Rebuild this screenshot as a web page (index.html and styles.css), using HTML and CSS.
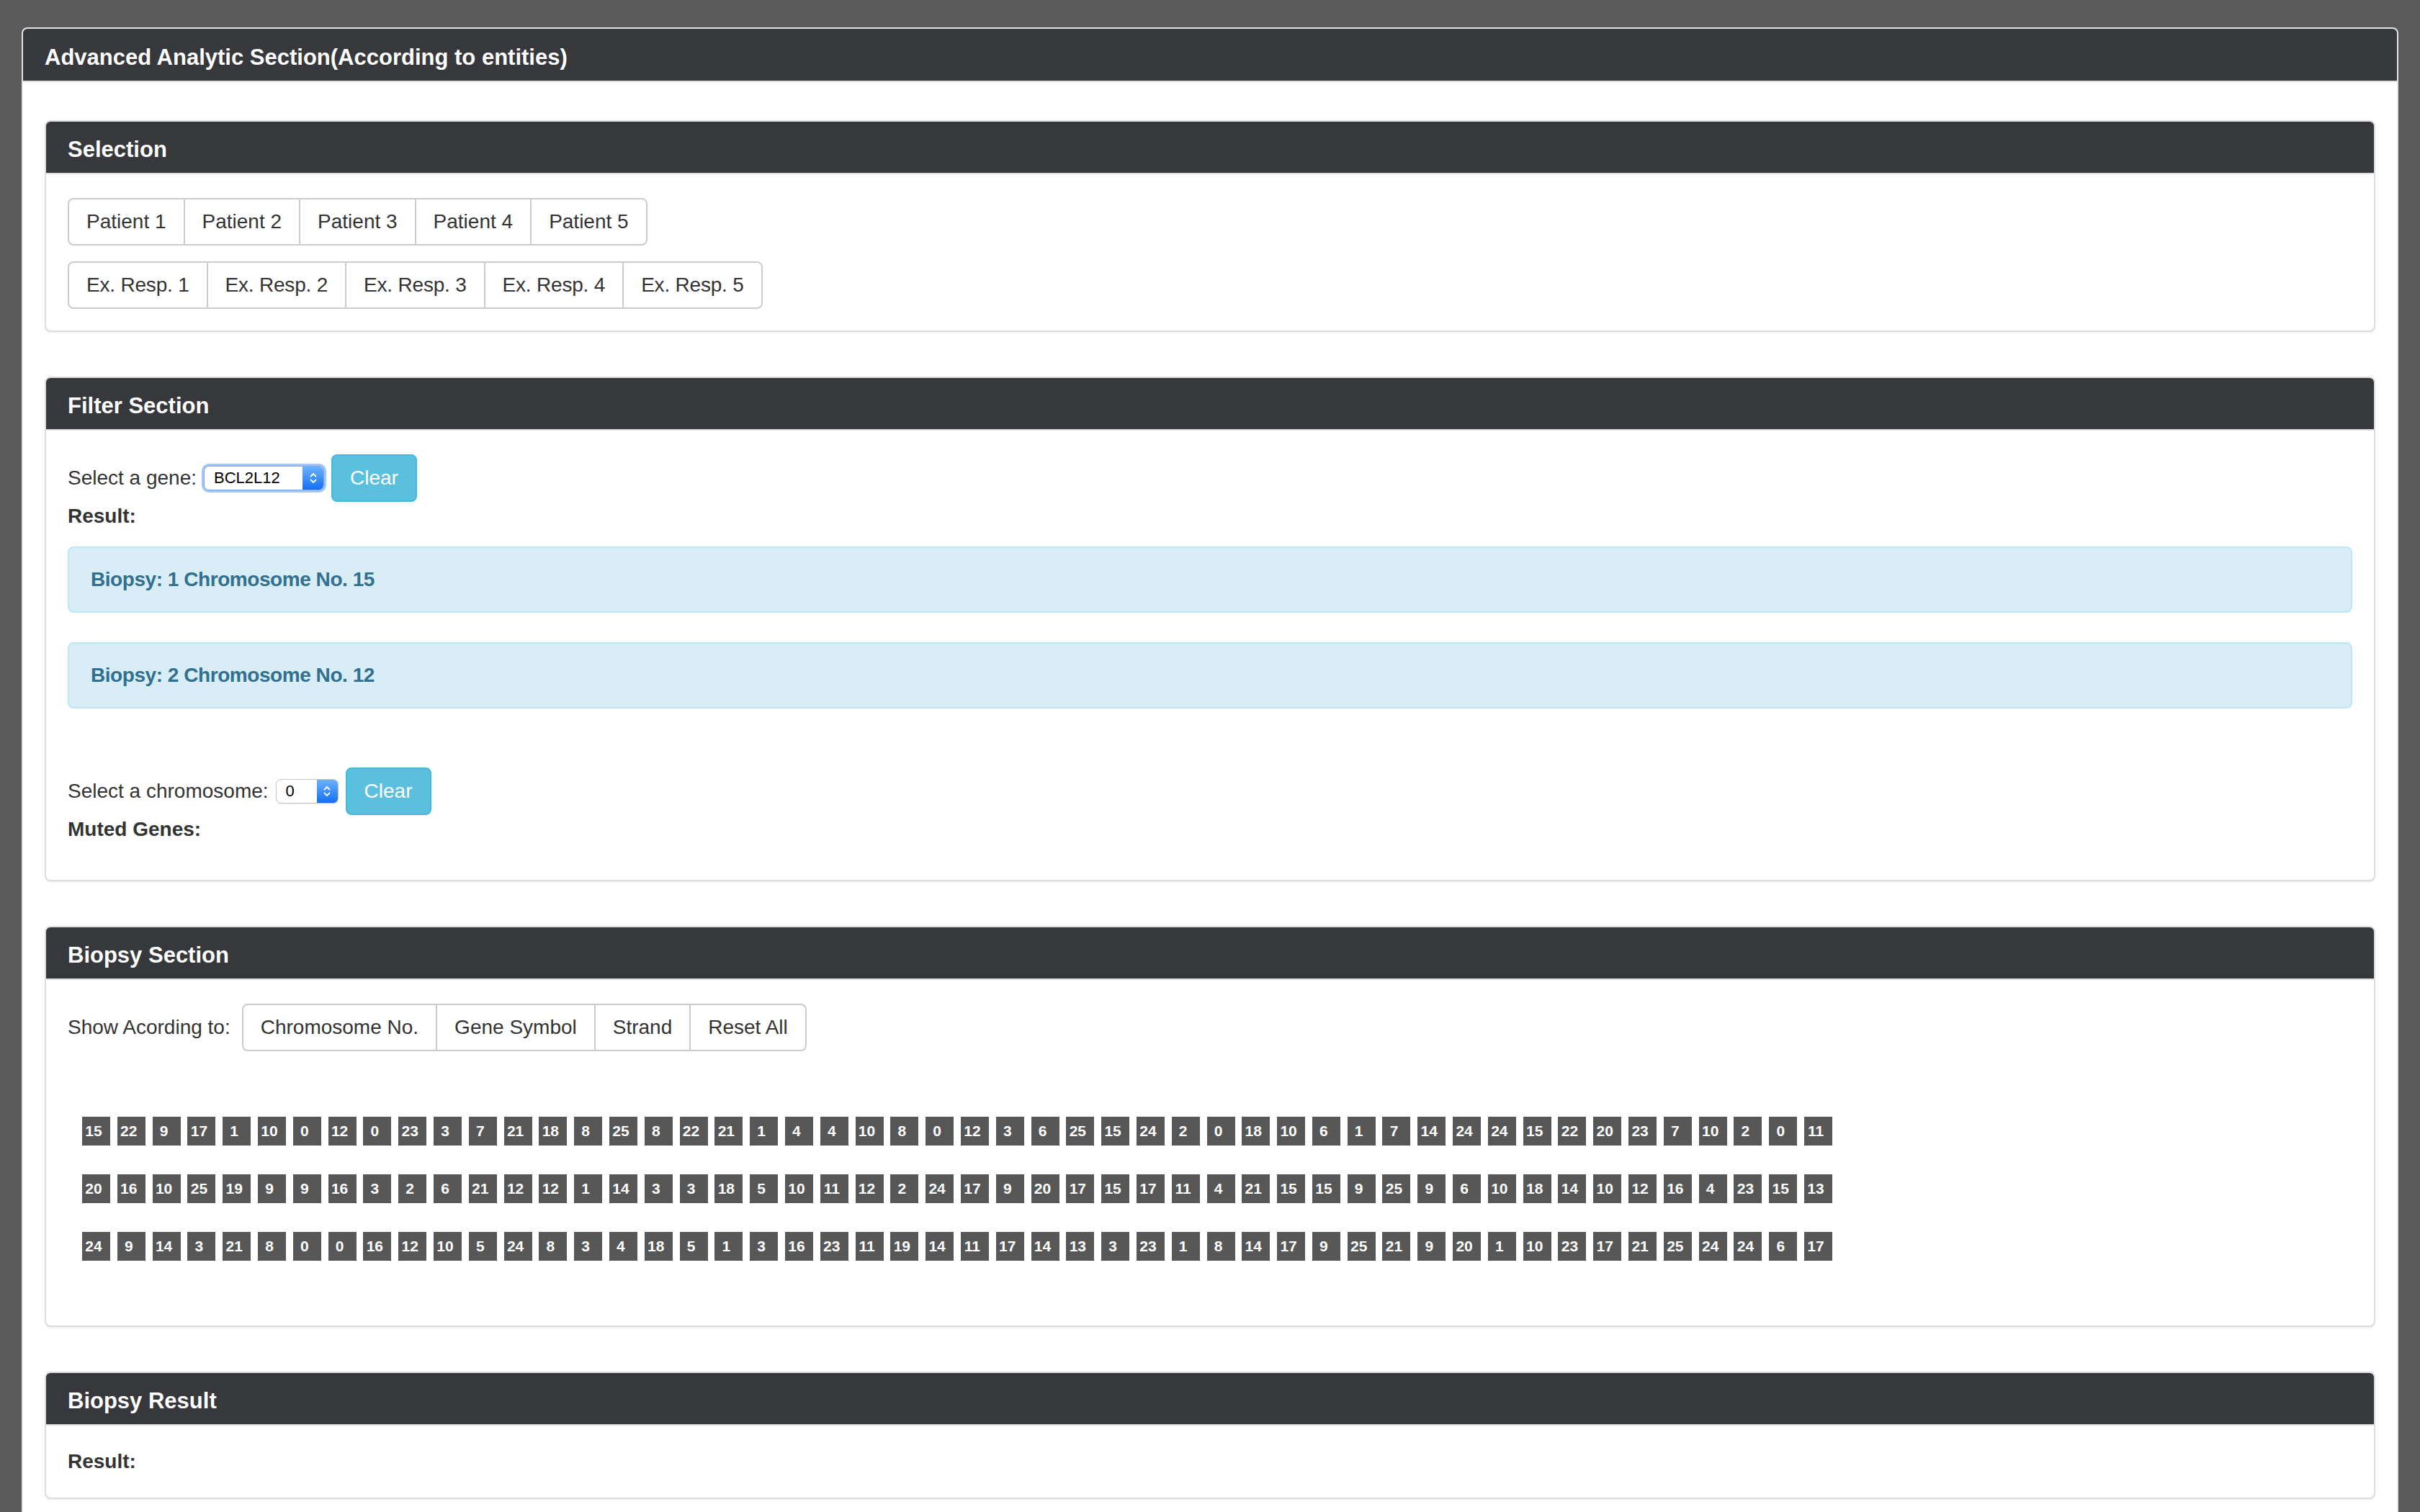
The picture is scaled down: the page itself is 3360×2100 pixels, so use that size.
FILE: index.html
```html
<!DOCTYPE html>
<html lang="en">
<head>
<meta charset="utf-8">
<title>Advanced Analytic Section</title>
<link rel="stylesheet" href="styles.css">
</head>
<body>
<div class="page">
  <div class="panel panel-outer">
    <div class="panel-heading heading-outer">Advanced Analytic Section(According to entities)</div>
    <div class="outer-body">

      <section class="panel section-panel">
        <div class="panel-heading">Selection</div>
        <div class="panel-body">
          <div class="btn-group group-gap">
            <button type="button" class="btn">Patient 1</button>
            <button type="button" class="btn">Patient 2</button>
            <button type="button" class="btn">Patient 3</button>
            <button type="button" class="btn">Patient 4</button>
            <button type="button" class="btn">Patient 5</button>
          </div>
          <div class="btn-group btn-tight">
            <button type="button" class="btn">Ex. Resp. 1</button>
            <button type="button" class="btn">Ex. Resp. 2</button>
            <button type="button" class="btn">Ex. Resp. 3</button>
            <button type="button" class="btn">Ex. Resp. 4</button>
            <button type="button" class="btn">Ex. Resp. 5</button>
          </div>
        </div>
      </section>

      <section class="panel section-panel">
        <div class="panel-heading">Filter Section</div>
        <div class="panel-body">
          <div class="form-row">
            <span class="form-label">Select a gene:</span>
            <div class="mac-select select-gene">
              <span class="select-value">BCL2L12</span>
              <span class="select-arrows"><svg width="12" height="20" viewBox="0 0 12 20"><path d="M2.5 7.5 L6 4 L9.5 7.5 M2.5 12.5 L6 16 L9.5 12.5" fill="none" stroke="#fff" stroke-width="1.8" stroke-linecap="round" stroke-linejoin="round"/></svg></span>
            </div>
            <button type="button" class="btn btn-info">Clear</button>
          </div>
          <p class="strong-line result-gap">Result:</p>
          <div class="alert alert-first">Biopsy: 1 Chromosome No. 15</div>
          <div class="alert alert-last">Biopsy: 2 Chromosome No. 12</div>
          <div class="form-row">
            <span class="form-label">Select a chromosome:</span>
            <div class="mac-select select-chrom">
              <span class="select-value">0</span>
              <span class="select-arrows"><svg width="12" height="20" viewBox="0 0 12 20"><path d="M2.5 7.5 L6 4 L9.5 7.5 M2.5 12.5 L6 16 L9.5 12.5" fill="none" stroke="#fff" stroke-width="1.8" stroke-linecap="round" stroke-linejoin="round"/></svg></span>
            </div>
            <button type="button" class="btn btn-info">Clear</button>
          </div>
          <p class="strong-line muted-gap">Muted Genes:</p>
        </div>
      </section>

      <section class="panel section-panel">
        <div class="panel-heading">Biopsy Section</div>
        <div class="panel-body">
          <div class="form-row">
            <span class="form-label show-label">Show Acording to:</span>
            <div class="btn-group">
              <button type="button" class="btn">Chromosome No.</button>
              <button type="button" class="btn">Gene Symbol</button>
              <button type="button" class="btn">Strand</button>
              <button type="button" class="btn">Reset All</button>
            </div>
          </div>
          <div class="chips">
            <div class="chip-row">
              <span class="chip">15</span><span class="chip">22</span><span class="chip">9</span><span class="chip">17</span><span class="chip">1</span><span class="chip">10</span><span class="chip">0</span><span class="chip">12</span><span class="chip">0</span><span class="chip">23</span><span class="chip">3</span><span class="chip">7</span><span class="chip">21</span><span class="chip">18</span><span class="chip">8</span><span class="chip">25</span><span class="chip">8</span><span class="chip">22</span><span class="chip">21</span><span class="chip">1</span><span class="chip">4</span><span class="chip">4</span><span class="chip">10</span><span class="chip">8</span><span class="chip">0</span><span class="chip">12</span><span class="chip">3</span><span class="chip">6</span><span class="chip">25</span><span class="chip">15</span><span class="chip">24</span><span class="chip">2</span><span class="chip">0</span><span class="chip">18</span><span class="chip">10</span><span class="chip">6</span><span class="chip">1</span><span class="chip">7</span><span class="chip">14</span><span class="chip">24</span><span class="chip">24</span><span class="chip">15</span><span class="chip">22</span><span class="chip">20</span><span class="chip">23</span><span class="chip">7</span><span class="chip">10</span><span class="chip">2</span><span class="chip">0</span><span class="chip">11</span>
            </div>
            <div class="chip-row">
              <span class="chip">20</span><span class="chip">16</span><span class="chip">10</span><span class="chip">25</span><span class="chip">19</span><span class="chip">9</span><span class="chip">9</span><span class="chip">16</span><span class="chip">3</span><span class="chip">2</span><span class="chip">6</span><span class="chip">21</span><span class="chip">12</span><span class="chip">12</span><span class="chip">1</span><span class="chip">14</span><span class="chip">3</span><span class="chip">3</span><span class="chip">18</span><span class="chip">5</span><span class="chip">10</span><span class="chip">11</span><span class="chip">12</span><span class="chip">2</span><span class="chip">24</span><span class="chip">17</span><span class="chip">9</span><span class="chip">20</span><span class="chip">17</span><span class="chip">15</span><span class="chip">17</span><span class="chip">11</span><span class="chip">4</span><span class="chip">21</span><span class="chip">15</span><span class="chip">15</span><span class="chip">9</span><span class="chip">25</span><span class="chip">9</span><span class="chip">6</span><span class="chip">10</span><span class="chip">18</span><span class="chip">14</span><span class="chip">10</span><span class="chip">12</span><span class="chip">16</span><span class="chip">4</span><span class="chip">23</span><span class="chip">15</span><span class="chip">13</span>
            </div>
            <div class="chip-row">
              <span class="chip">24</span><span class="chip">9</span><span class="chip">14</span><span class="chip">3</span><span class="chip">21</span><span class="chip">8</span><span class="chip">0</span><span class="chip">0</span><span class="chip">16</span><span class="chip">12</span><span class="chip">10</span><span class="chip">5</span><span class="chip">24</span><span class="chip">8</span><span class="chip">3</span><span class="chip">4</span><span class="chip">18</span><span class="chip">5</span><span class="chip">1</span><span class="chip">3</span><span class="chip">16</span><span class="chip">23</span><span class="chip">11</span><span class="chip">19</span><span class="chip">14</span><span class="chip">11</span><span class="chip">17</span><span class="chip">14</span><span class="chip">13</span><span class="chip">3</span><span class="chip">23</span><span class="chip">1</span><span class="chip">8</span><span class="chip">14</span><span class="chip">17</span><span class="chip">9</span><span class="chip">25</span><span class="chip">21</span><span class="chip">9</span><span class="chip">20</span><span class="chip">1</span><span class="chip">10</span><span class="chip">23</span><span class="chip">17</span><span class="chip">21</span><span class="chip">25</span><span class="chip">24</span><span class="chip">24</span><span class="chip">6</span><span class="chip">17</span>
            </div>
          </div>
        </div>
      </section>

      <section class="panel section-panel">
        <div class="panel-heading">Biopsy Result</div>
        <div class="panel-body body-result">
          <p class="strong-line">Result:</p>
        </div>
      </section>

    </div>
  </div>
</div>
</body>
</html>
```
FILE: styles.css
```css
html {
  overflow: hidden;
}

body {
  margin: 0;
  background: #5a5a5a;
  font-family: "Liberation Sans", Arial, sans-serif;
  font-size: 28px;
  line-height: 40px;
  color: #333;
}

.page {
  padding: 38px 30px 0;
}

.panel {
  background: #fff;
  border: 2px solid #dddddd;
  border-radius: 8px;
  box-shadow: 0 2px 2px rgba(0, 0, 0, 0.05);
}

.panel-outer {
  border-color: #e4e4e4;
}

.panel-heading {
  box-sizing: border-box;
  height: 73px;
  padding: 21px 30px 0;
  background: #37383c;
  color: #fff;
  font-size: 31px;
  font-weight: 700;
  line-height: 35px;
  border-bottom: 2px solid #dddddd;
  border-radius: 6px 6px 0 0;
}

.heading-outer {
  height: 74px;
  padding-top: 22px;
}

.outer-body {
  padding: 53px 30px 30px;
}

.section-panel {
  margin-bottom: 62px;
}

.panel-body {
  padding: 33px 30px 30px;
}

.body-result {
  padding-top: 30px;
}

/* buttons */
.btn-group {
  display: flex;
}

.group-gap {
  margin-bottom: 22px;
}

.btn-tight .btn {
  letter-spacing: -0.2px;
}

.btn {
  box-sizing: border-box;
  height: 66px;
  margin: 0;
  padding: 0 24px;
  font-family: inherit;
  font-size: 28px;
  line-height: 62px;
  color: #333;
  background: #fff;
  border: 2px solid #cccccc;
  border-radius: 0;
  white-space: nowrap;
}

.btn-group .btn + .btn {
  margin-left: -2px;
}

.btn-group .btn:first-child {
  border-radius: 8px 0 0 8px;
}

.btn-group .btn:last-child {
  border-radius: 0 8px 8px 0;
}

.btn-info {
  color: #fff;
  background: #5bc0de;
  border-color: #46b8da;
  border-radius: 8px;
}

/* form rows */
.form-row {
  display: flex;
  align-items: center;
  height: 66px;
}

.form-label {
  margin-right: 10px;
  white-space: nowrap;
}

.show-label {
  margin-right: 16px;
}

.mac-select {
  display: flex;
  box-sizing: border-box;
  height: 34px;
  margin-right: 10px;
  background: #fff;
  border: 1px solid #c4c4c4;
  border-radius: 7px;
  overflow: hidden;
  font-size: 22px;
  line-height: 32px;
  color: #000;
  box-shadow: 0 1px 1px rgba(0, 0, 0, 0.08);
}

.select-gene {
  width: 167px;
  border-color: #79a6ea;
  box-shadow: 0 0 0 3px #a3c6f5;
}

.select-chrom {
  width: 87px;
}

.select-value {
  flex: 1;
  padding-left: 13px;
}

.select-arrows {
  display: flex;
  align-items: center;
  justify-content: center;
  width: 29px;
  background: linear-gradient(#6eb1fb, #1170f5);
}

.strong-line {
  margin: 0;
  font-weight: 700;
}

.result-gap {
  margin-bottom: 22px;
}

.muted-gap {
  margin-bottom: 20px;
}

/* alerts */
.alert {
  display: flex;
  align-items: center;
  box-sizing: border-box;
  height: 92px;
  padding: 0 30px;
  background: #d9edf7;
  border: 2px solid #bce8f1;
  border-radius: 8px;
  color: #31708f;
  font-weight: 700;
  letter-spacing: -0.45px;
}

.alert-first {
  margin-bottom: 41px;
}

.alert-last {
  margin-bottom: 82px;
}

/* chips */
.chips {
  display: flex;
  flex-direction: column;
  gap: 40px;
  padding: 91px 0 60px 20px;
}

.chip-row {
  display: flex;
  gap: 9.8px;
}

.chip {
  box-sizing: border-box;
  width: 39px;
  height: 40px;
  padding-right: 7px;
  background: #575757;
  color: #fff;
  font-size: 21px;
  font-weight: 700;
  line-height: 40px;
  text-align: center;
}
```
